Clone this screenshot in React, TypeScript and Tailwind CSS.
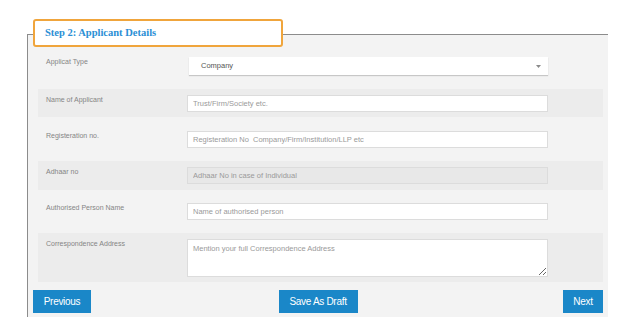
import React from "react";

const sans = { fontFamily: '"Liberation Sans", Arial, sans-serif' };

function Label({ children }: { children: React.ReactNode }) {
  return (
    <div className="w-[149px] shrink-0 pl-[8px] text-[7px] leading-[9px] text-[#858585]">
      {children}
    </div>
  );
}

function TextInput({ placeholder, disabled }: { placeholder: string; disabled?: boolean }) {
  return (
    <input
      type="text"
      disabled={disabled}
      placeholder={placeholder}
      className={
        "block w-[361px] h-[17px] border border-[#dcdcdc] px-[5px] text-[7.5px] text-[#555] outline-none placeholder:text-[#9a9a9a] " +
        (disabled ? "bg-[#e8e8e8]" : "bg-white")
      }
    />
  );
}

export default function App() {
  return (
    <div className="w-[629px] h-[334px] bg-white pt-[34px] pl-[27px]" style={sans}>
      <div className="w-[581px] h-[283px] border-l border-t border-[#8c8c8c] bg-[#f3f3f3]">
        <div className="-mt-[16px] ml-[5px] w-[250px] h-[28px] border-2 border-[#f0a53c] rounded-[3px] bg-white flex items-center pl-[10px]">
          <span
            className="text-[10.5px] font-bold text-[#2b8fd5]"
            style={{ fontFamily: '"Liberation Serif", "Times New Roman", serif' }}
          >
            Step 2: Applicant Details
          </span>
        </div>

        <div className="ml-[10px] w-[565px]">
          {/* Row 1 */}
          <div className="flex items-start pt-[10px] pb-[14px]">
            <Label>Applicat Type</Label>
            <div className="ml-[2px] w-[359px] h-[18px] bg-white shadow-[0_1px_1px_rgba(0,0,0,0.18)] flex items-center justify-between pl-[12px] pr-[7px]">
              <span className="text-[7.5px] text-[#555]">Company</span>
              <svg width="5" height="3" viewBox="0 0 5 3">
                <path d="M0 0 L5 0 L2.5 3 Z" fill="#8a8a8a" />
              </svg>
            </div>
          </div>

          {/* Row 2 */}
          <div className="flex items-start bg-[#ececec] pt-[6px] pb-[5px]">
            <Label>Name of Applicant</Label>
            <TextInput placeholder="Trust/Firm/Society etc." />
          </div>

          {/* Row 3 */}
          <div className="flex items-start pt-[14px] pb-[13px]">
            <Label>Registeration no.</Label>
            <TextInput placeholder="Registeration No  Company/Firm/Institution/LLP etc" />
          </div>

          {/* Row 4 */}
          <div className="flex items-start bg-[#ececec] pt-[6px] pb-[6px]">
            <Label>Adhaar no</Label>
            <TextInput placeholder="Adhaar No in case of Individual" disabled />
          </div>

          {/* Row 5 */}
          <div className="flex items-start pt-[13px] pb-[13px]">
            <Label>Authorised Person Name</Label>
            <TextInput placeholder="Name of authorised person" />
          </div>

          {/* Row 6 */}
          <div className="flex items-start bg-[#ececec] pt-[6px] pb-[5px]">
            <Label>Correspondence Address</Label>
            <textarea
              placeholder="Mention your full Correspondence Address"
              className="block w-[361px] h-[38px] border border-[#dcdcdc] bg-white px-[5px] py-[3px] text-[7.5px] text-[#555] outline-none placeholder:text-[#9a9a9a]"
            />
          </div>
        </div>

        <div className="mt-[8px] ml-[5px] w-[570px] grid grid-cols-3 items-center">
          <div className="flex justify-start">
            <button className="w-[58px] h-[23px] bg-[#1a87c8] text-white text-[10px] tracking-[-0.3px]">
              Previous
            </button>
          </div>
          <div className="flex justify-center">
            <button className="w-[79px] h-[23px] bg-[#1a87c8] text-white text-[10px] tracking-[-0.3px]">
              Save As Draft
            </button>
          </div>
          <div className="flex justify-end">
            <button className="w-[40px] h-[23px] bg-[#1a87c8] text-white text-[10px] tracking-[-0.3px]">
              Next
            </button>
          </div>
        </div>
      </div>
    </div>
  );
}
